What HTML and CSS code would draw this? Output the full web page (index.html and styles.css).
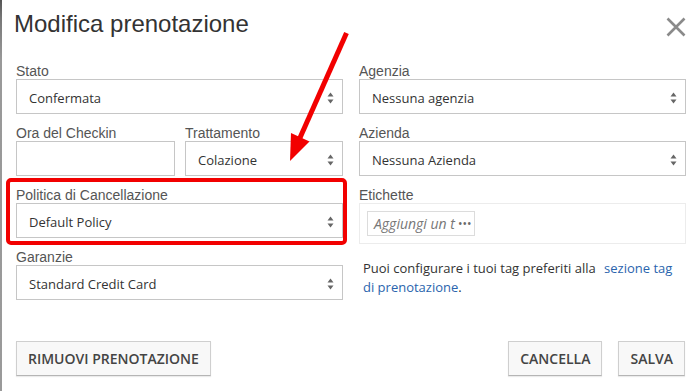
FILE: index.html
```html
<!DOCTYPE html>
<html lang="it">
<head>
<meta charset="utf-8">
<title>Modifica prenotazione</title>
<link rel="stylesheet" href="styles.css">
</head>
<body>
<div class="edge"></div>
<div class="modal">
  <header class="modal-header">
    <h1 class="modal-title">Modifica prenotazione</h1>
    <button class="close" aria-label="Chiudi">
      <svg width="20" height="20" viewBox="0 0 20 20"><path d="M1.5 1.5L18.5 18.5M18.5 1.5L1.5 18.5" stroke="#8a8a8a" stroke-width="2.6" fill="none"/></svg>
    </button>
  </header>

  <div class="form-grid">
    <div class="col">
      <div class="field">
        <label class="label">Stato</label>
        <div class="select"><span>Confermata</span><svg class="caret" width="7" height="12" viewBox="0 0 7 12"><path d="M3.5 0.5L6.5 4.5H0.5Z M0.5 7.5H6.5L3.5 11.5Z" fill="#666"/></svg></div>
      </div>
      <div class="field-pair">
        <div class="field">
          <label class="label">Ora del Checkin</label>
          <div class="input"></div>
        </div>
        <div class="field">
          <label class="label">Trattamento</label>
          <div class="select"><span>Colazione</span><svg class="caret" width="7" height="12" viewBox="0 0 7 12"><path d="M3.5 0.5L6.5 4.5H0.5Z M0.5 7.5H6.5L3.5 11.5Z" fill="#666"/></svg></div>
        </div>
      </div>
      <div class="field">
        <label class="label">Politica di Cancellazione</label>
        <div class="select"><span>Default Policy</span><svg class="caret" width="7" height="12" viewBox="0 0 7 12"><path d="M3.5 0.5L6.5 4.5H0.5Z M0.5 7.5H6.5L3.5 11.5Z" fill="#666"/></svg></div>
      </div>
      <div class="field">
        <label class="label">Garanzie</label>
        <div class="select"><span>Standard Credit Card</span><svg class="caret" width="7" height="12" viewBox="0 0 7 12"><path d="M3.5 0.5L6.5 4.5H0.5Z M0.5 7.5H6.5L3.5 11.5Z" fill="#666"/></svg></div>
      </div>
    </div>

    <div class="col">
      <div class="field">
        <label class="label">Agenzia</label>
        <div class="select"><span>Nessuna agenzia</span><svg class="caret" width="7" height="12" viewBox="0 0 7 12"><path d="M3.5 0.5L6.5 4.5H0.5Z M0.5 7.5H6.5L3.5 11.5Z" fill="#666"/></svg></div>
      </div>
      <div class="field">
        <label class="label">Azienda</label>
        <div class="select"><span>Nessuna Azienda</span><svg class="caret" width="7" height="12" viewBox="0 0 7 12"><path d="M3.5 0.5L6.5 4.5H0.5Z M0.5 7.5H6.5L3.5 11.5Z" fill="#666"/></svg></div>
      </div>
      <div class="field">
        <label class="label">Etichette</label>
        <div class="tags">
          <div class="tag-input"><span class="ph">Aggiungi un t</span><span class="dots">•••</span></div>
        </div>
      </div>
      <p class="hint">Puoi configurare i tuoi tag preferiti alla <a href="#" class="link">sezione tag di prenotazione</a>.</p>
    </div>
  </div>

  <footer class="modal-footer">
    <button class="btn">RIMUOVI PRENOTAZIONE</button>
    <div class="btn-group">
      <button class="btn">CANCELLA</button>
      <button class="btn">SALVA</button>
    </div>
  </footer>
</div>

<div class="highlight"></div>
<svg class="arrow" width="700" height="391" viewBox="0 0 700 391">
  <line x1="346.5" y1="33" x2="299" y2="140" stroke="#f20000" stroke-width="5"/>
  <polygon points="290,161 291,133 309.5,141.5" fill="#f20000"/>
</svg>
</body>
</html>
```

FILE: styles.css
```css
html, body {
  margin: 0;
  padding: 0;
  background: #fff;
}
body {
  width: 700px;
  height: 391px;
  overflow: hidden;
  position: relative;
  font-family: "Open Sans", "Liberation Sans", sans-serif;
  color: #333;
}
.edge {
  position: absolute;
  left: 0;
  top: 0;
  width: 2px;
  height: 391px;
  background: linear-gradient(to bottom, #555 0, #777 18px, #999 60px, #9a9a9a 100%);
}
.modal {
  padding: 10px 15px 0 16px;
}
.modal-header {
  display: flex;
  justify-content: space-between;
  align-items: flex-start;
}
.modal-title {
  margin: 0 0 0 -2px;
  font-family: "Liberation Sans", Arial, sans-serif;
  font-weight: normal;
  font-size: 24px;
  line-height: 28px;
  color: #333;
}
.close {
  margin: 7px -1px 0 0;
  padding: 0;
  border: 0;
  background: none;
  width: 20px;
  height: 20px;
  display: block;
}
.close svg {
  display: block;
}
.form-grid {
  margin-top: 25px;
  display: grid;
  grid-template-columns: 327px 327px;
  column-gap: 16px;
  align-items: start;
}
.col {
  display: flex;
  flex-direction: column;
  gap: 11px;
}
.field-pair {
  display: grid;
  grid-template-columns: 159px 158px;
  column-gap: 10px;
}
.field {
  display: flex;
  flex-direction: column;
}
.label {
  font-family: "Liberation Sans", Arial, sans-serif;
  font-size: 14px;
  line-height: 16px;
  color: #555;
}
.select, .input {
  box-sizing: border-box;
  height: 35px;
  border: 1px solid #c6c6c6;
  background: #fff;
}
.select {
  display: flex;
  align-items: center;
  justify-content: space-between;
  padding: 2px 8px 0 12px;
  font-size: 13px;
  color: #333;
}
.caret {
  display: block;
}
.tags {
  box-sizing: border-box;
  height: 41px;
  border: 1px solid #ececec;
  padding: 7px 7px;
}
.tag-input {
  box-sizing: border-box;
  width: 108px;
  height: 25px;
  border: 1px solid #dcdcdc;
  display: flex;
  align-items: center;
  padding-left: 6px;
  font-size: 14px;
  font-style: italic;
  color: #777;
  white-space: nowrap;
  overflow: hidden;
}
.dots {
  font-style: normal;
  font-size: 12px;
  letter-spacing: 0;
  margin-left: 3px;
  color: #6a6a6a;
}
.hint {
  margin: 4px 10px 0 4px;
  font-size: 13px;
  line-height: 19px;
  color: #333;
}
.link {
  color: #2a64ad;
  text-decoration: none;
  margin-left: 5px;
}
.modal-footer {
  margin-top: 41px;
  display: flex;
  justify-content: space-between;
  align-items: center;
}
.btn-group {
  display: flex;
  gap: 16px;
}
.btn {
  box-sizing: border-box;
  height: 35px;
  padding: 0 11px;
  border: 1px solid #cfcfcf;
  border-bottom-color: #b5b5b5;
  background: #f8f8f8;
  font-family: "Open Sans", sans-serif;
  font-weight: 600;
  font-size: 14px;
  color: #444;
  box-shadow: 0 1px 1px rgba(0, 0, 0, 0.08);
}
.highlight {
  position: absolute;
  left: 6px;
  top: 178px;
  width: 341px;
  height: 67px;
  box-sizing: border-box;
  border: 4px solid #f20000;
  border-radius: 5px;
}
.arrow {
  position: absolute;
  left: 0;
  top: 0;
  pointer-events: none;
}
```
